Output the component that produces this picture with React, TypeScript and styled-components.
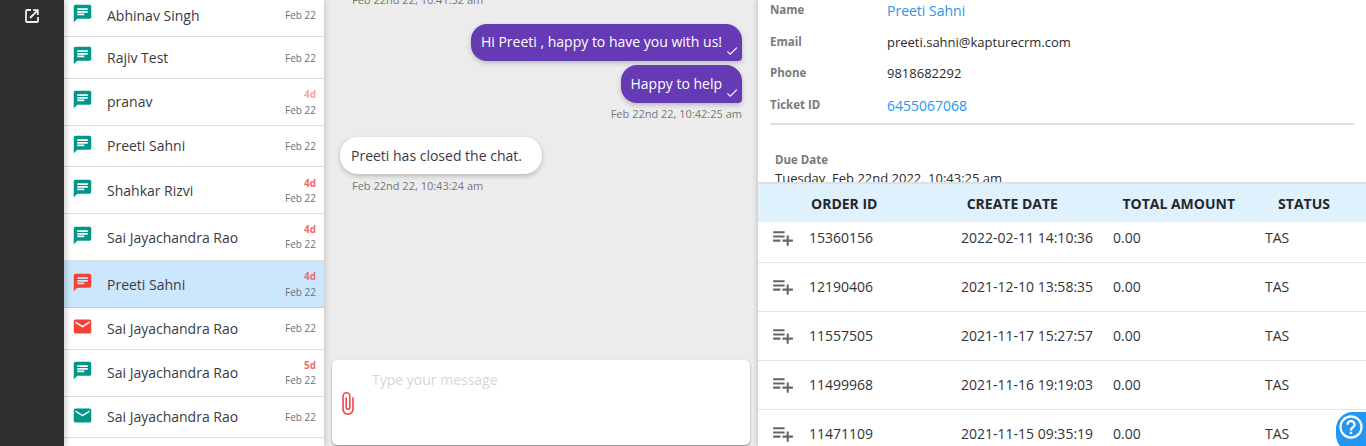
import React from "react";
import styled, { createGlobalStyle } from "styled-components";
import { MdChat, MdEmail, MdPlaylistAdd, MdDone, MdAttachFile, MdHelpOutline } from "react-icons/md";

const Global = createGlobalStyle`
  html, body { margin: 0; padding: 0; height: 446px; overflow: hidden; background: #fff; }
  body { font-family: "Open Sans", "Liberation Sans", sans-serif; color: #333; }
  * { box-sizing: border-box; }
`;

const Shell = styled.div`display: flex; width: 1366px; height: 446px; overflow: hidden; position: relative;`;
const Sidebar = styled.aside`width: 64px; flex: none; background: #2f2f2f; display: flex; justify-content: center; align-items: flex-start; padding-top: 9px; color: #eee; box-shadow: 2px 0 6px rgba(0,0,0,.2); z-index: 2;`;
const ListPane = styled.div`width: 260px; flex: none; background: #fff; z-index: 1; box-shadow: 1px 0 6px rgba(0,0,0,.18);`;
const Row = styled.div<{ $h: number; $sel?: boolean }>`
  height: ${p => p.$h}px; display: flex; position: relative; padding: 0 8px 0 9px;
  border-bottom: 1px solid ${p => (p.$sel ? "#b9d3ea" : "#dedede")};
  background: ${p => (p.$sel ? "#cce7fd" : "#fff")};
`;
const IconSlot = styled.div<{ $c: string; $top: number }>`width: 35.5px; flex: none; color: ${p => p.$c}; font-size: 21px; line-height: 0; padding-top: ${p => p.$top}px; margin-left: -1.5px;`;
const Name = styled.div<{ $top: number }>`flex: 1; font-size: 14px; line-height: 20px; padding-top: ${p => p.$top}px; color: #3a3a44;`;
const Meta = styled.div<{ $top: number; $gap?: number }>`text-align: right; padding-top: ${p => p.$top}px; display: flex; flex-direction: column; gap: ${p => p.$gap ?? 3}px;`;
const Age = styled.span<{ $faded?: boolean }>`font-size: 10px; line-height: 12px; font-weight: 700; color: #f26a6a; opacity: ${p => (p.$faded ? 0.6 : 1)};`;
const DateText = styled.span`font-size: 10px; line-height: 12px; color: #6f6f78;`;

const Chat = styled.main`width: 434px; flex: none; background: #ececec; padding: 0 8px 0 8px; display: flex; flex-direction: column; position: relative;`;
const Stamp = styled.div<{ $right?: boolean }>`font-size: 11px; line-height: 14px; color: #777; ${p => p.$right ? "text-align: right; padding-right: 8px;" : "padding-left: 20px;"}`;
const ClippedStamp = styled(Stamp)`margin-top: -7px; height: 31px;`;
const Bubble = styled.div<{ $mine?: boolean; $h: number; $gap: number; $top: number }>`
  align-self: ${p => (p.$mine ? "flex-end" : "flex-start")};
  height: ${p => p.$h}px; margin-top: ${p => p.$gap}px; padding-top: ${p => p.$top}px; font-size: 14px; line-height: 20px; position: relative;
  box-shadow: 0 2px 5px rgba(0,0,0,.22);
  padding-right: 20px;
  ${p => p.$mine
    ? "background: #6639b5; color: #fff; border-radius: 16px 16px 4px 16px; padding-left: 10px; margin-right: 8px;"
    : "background: #fff; color: #3a3a44; border-radius: 18px; padding-left: 11px; margin-left: 8px;"}
`;
const Tick = styled.span`position: absolute; right: 3px; bottom: 3px; font-size: 14px; line-height: 0; color: #fff;`;
const Composer = styled.div`margin-top: auto; margin-bottom: 1px; height: 85px; background: #fff; border-radius: 5px; box-shadow: 0 1px 2px rgba(0,0,0,.45); display: flex; padding: 10px 0 0 4px; gap: 10px;`;
const Clip = styled.span`font-size: 25px; color: #f4404a; line-height: 0; padding-top: 21px; transform: translateX(-1px);`;
const Placeholder = styled.span`font-size: 14px; line-height: 20px; color: #d2d7e2; margin-left: 1px;`;

const Right = styled.section`width: 608px; flex: none; background: #fff; box-shadow: -1px 0 5px rgba(0,0,0,.18); z-index: 1;`;
const Details = styled.div`height: 184px; overflow: hidden; border-bottom: 2px solid #e0e0e0; padding: 0 12px; position: relative;`;
const Fields = styled.div`margin-top: -6px;`;
const Field = styled.div<{ $h: number }>`display: flex; height: ${p => p.$h}px; align-items: center;`;
const Label = styled.span`width: 117px; flex: none; font-size: 11.5px; font-weight: 700; color: #7a7a7a; margin-top: -2px;`;
const Value = styled.span<{ $link?: boolean }>`font-size: ${p => (p.$link ? 14 : 13)}px; color: ${p => (p.$link ? "#2a96e8" : "#2a2a2a")};`;
const Rule = styled.div`height: 2px; background: #e0e0e0; margin-top: 1px; width: 584px;`;
const Due = styled.div`padding: 27px 0 0 5px;`;
const DueLabel = styled.div`font-size: 11.5px; font-weight: 700; color: #7a7a7a; line-height: 16px;`;
const DueValue = styled.div`font-size: 13px; color: #2a2a2a; line-height: 20px;`;
const HeadRow = styled.div`height: 38px; background: #dff1fd; display: grid; grid-template-columns: repeat(4, 155.7px); padding-left: 53px; align-items: center; font-size: 14px; font-weight: 700; color: #26262c;`;
const BodyRow = styled.div<{ $first?: boolean }>`height: ${p => (p.$first ? 41 : 49)}px; border-bottom: 1px solid #e4e4e4; display: grid; grid-template-columns: 51px 152px 152px 152px 1fr; align-items: start; padding-top: ${p => (p.$first ? 6 : 14)}px; font-size: 14px; line-height: 19px; color: #333;`;
const Expand = styled.span`color: #666; font-size: 25px; line-height: 0; padding: 0 0 0 12px; margin-top: -3px;`;
const Help = styled.div`position: absolute; left: 1336px; top: 412px; width: 40px; height: 40px; border-radius: 17px 0 0 17px; background: #2196f3; color: #fff; font-size: 28px; line-height: 0; padding: 1px 0 0 1px; z-index: 5;`;

const rows = [
  { n: "Abhinav Singh", h: 37, c: "#009688", it: 3, nt: 6, mt: 9 },
  { n: "Rajiv Test", h: 42, c: "#009688", it: 8, nt: 11, mt: 15 },
  { n: "pranav", h: 47, c: "#009688", it: 10, nt: 13, age: "4d", faded: true, mt: 9, gap: 4 },
  { n: "Preeti Sahni", h: 41, c: "#009688", it: 8, nt: 10, mt: 14 },
  { n: "Shahkar Rizvi", h: 47, c: "#009688", it: 11, nt: 14, age: "4d", mt: 10 },
  { n: "Sai Jayachandra Rao", h: 47, c: "#009688", it: 11, nt: 14, age: "4d", mt: 9 },
  { n: "Preeti Sahni", h: 47, c: "#f44336", it: 11, nt: 14, age: "4d", mt: 9, gap: 4, sel: true },
  { n: "Sai Jayachandra Rao", h: 42, c: "#f44336", it: 7.5, nt: 11, mail: true, mt: 14 },
  { n: "Sai Jayachandra Rao", h: 47, c: "#009688", it: 10, nt: 13, age: "5d", mt: 9 },
  { n: "Sai Jayachandra Rao", h: 41, c: "#009688", it: 7.5, nt: 10, mail: true, mt: 14 },
];

const orders = [
  ["15360156", "2022-02-11 14:10:36"],
  ["12190406", "2021-12-10 13:58:35"],
  ["11557505", "2021-11-17 15:27:57"],
  ["11499968", "2021-11-16 19:19:03"],
  ["11471109", "2021-11-15 09:35:19"],
];

const OpenIcon = () => (
  <svg width="14" height="14" viewBox="0 0 14 14" fill="none" stroke="currentColor">
    <path d="M6 1H2a1 1 0 0 0-1 1v10a1 1 0 0 0 1 1h10a1 1 0 0 0 1-1V8" strokeWidth="1.8" />
    <path d="M5 9 12 2M8 1.2h4.8V6" strokeWidth="1.8" />
  </svg>
);

export default function App() {
  return (
    <Shell>
      <Global />
      <Sidebar><OpenIcon /></Sidebar>
      <ListPane>
        {rows.map((r, i) => (
          <Row key={i} $h={r.h} $sel={r.sel}>
            <IconSlot $c={r.c} $top={r.it}>{r.mail ? <MdEmail /> : <MdChat />}</IconSlot>
            <Name $top={r.nt}>{r.n}</Name>
            <Meta $top={r.mt} $gap={r.gap}>
              {r.age && <Age $faded={r.faded}>{r.age}</Age>}
              <DateText>Feb 22</DateText>
            </Meta>
          </Row>
        ))}
      </ListPane>
      <Chat>
        <ClippedStamp>Feb 22nd 22, 10:41:52 am</ClippedStamp>
        <Bubble $mine $h={37} $gap={0} $top={8}>Hi Preeti , happy to have you with us!<Tick><MdDone /></Tick></Bubble>
        <Bubble $mine $h={38} $gap={4} $top={9}>Happy to help<Tick><MdDone /></Tick></Bubble>
        <Stamp $right style={{ marginTop: 4 }}>Feb 22nd 22, 10:42:25 am</Stamp>
        <Bubble $h={37} $gap={16} $top={9}>Preeti has closed the chat.</Bubble>
        <Stamp style={{ marginTop: 5 }}>Feb 22nd 22, 10:43:24 am</Stamp>
        <Composer>
          <Clip><MdAttachFile /></Clip>
          <Placeholder>Type your message</Placeholder>
        </Composer>
      </Chat>
      <Right>
        <Details>
          <Fields>
            <Field $h={32}><Label>Name</Label><Value $link>Preeti Sahni</Value></Field>
            <Field $h={32}><Label>Email</Label><Value>preeti.sahni@kapturecrm.com</Value></Field>
            <Field $h={30}><Label>Phone</Label><Value>9818682292</Value></Field>
            <Field $h={34}><Label>Ticket ID</Label><Value $link>6455067068</Value></Field>
          </Fields>
          <Rule />
          <Due>
            <DueLabel>Due Date</DueLabel>
            <DueValue>Tuesday, Feb 22nd 2022, 10:43:25 am</DueValue>
          </Due>
        </Details>
        <HeadRow><span>ORDER ID</span><span>CREATE DATE</span><span>TOTAL AMOUNT</span><span>STATUS</span></HeadRow>
        {orders.map((o, i) => (
          <BodyRow key={o[0]} $first={i === 0}>
            <Expand><MdPlaylistAdd /></Expand>
            <span>{o[0]}</span><span>{o[1]}</span><span>0.00</span><span>TAS</span>
          </BodyRow>
        ))}
      </Right>
      <Help><MdHelpOutline /></Help>
    </Shell>
  );
}
